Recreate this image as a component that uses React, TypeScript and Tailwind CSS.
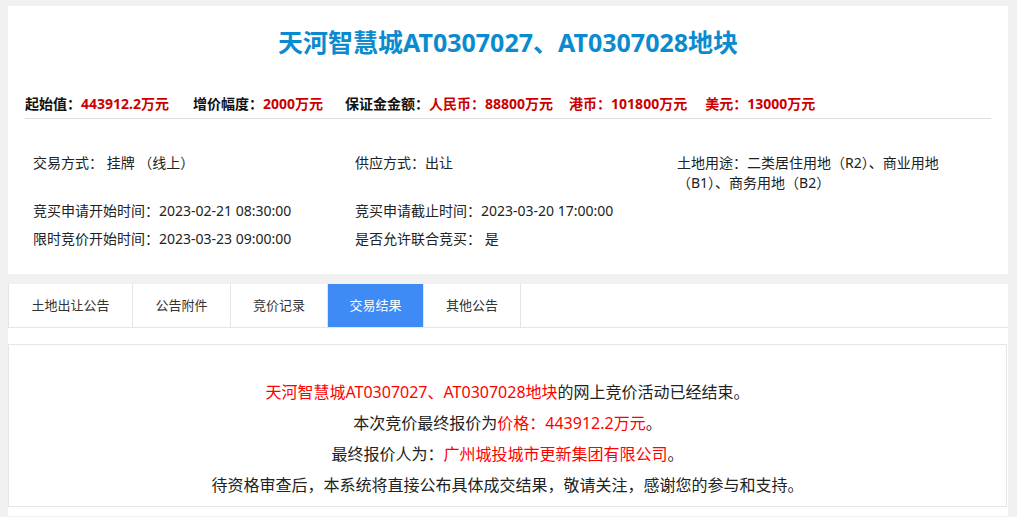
import React from "react";

const font = { fontFamily: '"Noto Sans", "Noto Sans CJK SC", sans-serif' };

export default function App() {
  const tabs = [
    { t: "土地出让公告", w: "w-[125px] border-l" },
    { t: "公告附件", w: "w-[98px]" },
    { t: "竞价记录", w: "w-[97px]" },
    { t: "交易结果", w: "w-[96px]" },
    { t: "其他公告", w: "w-[97px]" },
  ];
  return (
    <div className="min-h-[517px] bg-[#f1f1f1] pl-[8px] pr-[9px] pt-[6px]" style={font}>
      <div className="h-[268px] bg-white">
        <h1 className="pt-[18px] text-center text-[25px] font-bold leading-[36px] text-[#0b8bcf]">
          天河智慧城AT0307027、AT0307028地块
        </h1>
        <div className="mx-[17px] mt-[34px] flex border-b border-[#dcdce4] pb-[4px] text-[14px] font-bold leading-[20px] text-[#111]">
          <span className="mr-[24px]">
            起始值：<span className="text-[#cc0000]">443912.2万元</span>
          </span>
          <span className="mr-[22px]">
            增价幅度：<span className="text-[#cc0000]">2000万元</span>
          </span>
          <span>
            保证金金额：<span className="mr-[16px] text-[#cc0000]">人民币：88800万元</span>
            <span className="mr-[18px] text-[#cc0000]">港币：101800万元</span>
            <span className="text-[#cc0000]">美元：13000万元</span>
          </span>
        </div>
        <div className="mt-[34px] grid grid-cols-[322px_322px_280px] gap-y-[8px] pl-[25px] text-[14px] leading-[20px] text-[#222]">
          <div>交易方式： 挂牌 （线上）</div>
          <div>供应方式：出让</div>
          <div>土地用途：二类居住用地（R2）、商业用地（B1）、商务用地（B2）</div>
          <div>竞买申请开始时间：2023-02-21 08:30:00</div>
          <div>竞买申请截止时间：2023-03-20 17:00:00</div>
          <div></div>
          <div>限时竞价开始时间：2023-03-23 09:00:00</div>
          <div>是否允许联合竞买： 是</div>
          <div></div>
        </div>
      </div>
      <div className="mt-[10px] bg-white">
        <div className="flex border-b border-[#e4e4ec]">
          {tabs.map((x, i) => (
            <div
              key={x.t}
              className={
                "flex h-[43px] items-center justify-center border-r border-[#e4e4ec] text-[13px] " +
                x.w +
                (i === 3 ? " bg-[#3e8bf6] text-white" : " text-[#333]")
              }
            >
              {x.t}
            </div>
          ))}
        </div>
        <div className="mt-[16px] mr-[1px] border border-[#e6e6e6] pt-[32px] pb-[5px] text-center text-[16px] leading-[31px] text-[#222]">
          <p>
            <span className="text-[#ff0000]">天河智慧城AT0307027、AT0307028地块</span>的网上竞价活动已经结束。
          </p>
          <p>
            本次竞价最终报价为<span className="text-[#ff0000]">价格：443912.2万元</span>。
          </p>
          <p>
            最终报价人为：<span className="text-[#ff0000]">广州城投城市更新集团有限公司</span>。
          </p>
          <p>待资格审查后，本系统将直接公布具体成交结果，敬请关注，感谢您的参与和支持。</p>
        </div>
        <div className="h-[9px]"></div>
      </div>
    </div>
  );
}
